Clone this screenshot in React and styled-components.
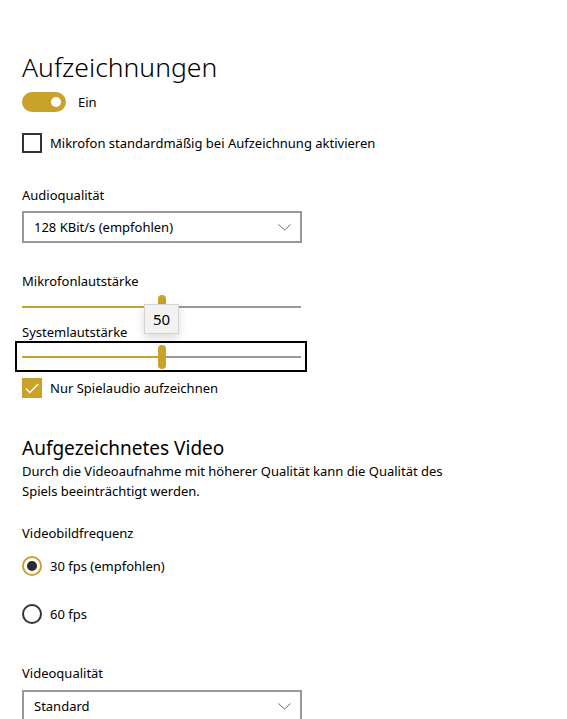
import React from 'react';
import styled, { createGlobalStyle } from 'styled-components';

const GOLD = '#c9a22a';

const GlobalStyle = createGlobalStyle`
  body {
    margin: 0;
    background: #ffffff;
    font-family: 'Noto Sans', 'Open Sans', sans-serif;
    color: #000000;
  }
`;

const Page = styled.div`
  padding: 49px 0 0 22px;
  width: 567px;
  height: 719px;
  box-sizing: border-box;
  overflow: hidden;
`;

const Title = styled.h1`
  margin: 0;
  font-size: 26.5px;
  line-height: 36px;
  font-weight: 300;
`;

const SubTitle = styled.h2`
  margin: 37px 0 0;
  font-size: 19px;
  line-height: 26px;
  font-weight: 400;
`;

const Text = styled.p`
  margin: ${(p) => p.$mt || 0}px 0 0;
  font-size: 13px;
  line-height: 20px;
  width: ${(p) => (p.$wide ? '450px' : 'auto')};
`;

const Row = styled.div`
  display: flex;
  align-items: center;
  gap: ${(p) => p.$gap || 8}px;
  margin-top: ${(p) => p.$mt || 0}px;
  font-size: 13px;
  line-height: 20px;
`;

const Toggle = styled.div`
  width: 44px;
  height: 20px;
  border-radius: 10px;
  background: ${GOLD};
  display: flex;
  align-items: center;
  justify-content: flex-end;
  padding-right: 5px;
  box-sizing: border-box;
  &::after {
    content: '';
    width: 10px;
    height: 10px;
    border-radius: 50%;
    background: #ffffff;
  }
`;

const Box = styled.div`
  width: 20px;
  height: 20px;
  box-sizing: border-box;
  border: 2px solid ${(p) => (p.$checked ? GOLD : '#333333')};
  background: ${(p) => (p.$checked ? GOLD : '#ffffff')};
  display: flex;
  align-items: center;
  justify-content: center;
`;

const Radio = styled.div`
  width: 20px;
  height: 20px;
  box-sizing: border-box;
  border-radius: 50%;
  border: 2px solid ${(p) => (p.$checked ? GOLD : '#333333')};
  display: flex;
  align-items: center;
  justify-content: center;
  &::after {
    content: '';
    display: ${(p) => (p.$checked ? 'block' : 'none')};
    width: 10px;
    height: 10px;
    border-radius: 50%;
    background: #2b2b2b;
  }
`;

const Select = styled.div`
  margin-top: ${(p) => p.$mt || 0}px;
  width: 280px;
  height: 32px;
  box-sizing: border-box;
  border: 2px solid #999999;
  display: flex;
  align-items: center;
  justify-content: space-between;
  padding: 0 9px 0 10px;
  font-size: 13px;
`;

const SliderBox = styled.div`
  position: relative;
  margin: ${(p) => p.$mt || 0}px 0 0 -7px;
  width: 292px;
  height: 31px;
  box-sizing: border-box;
  padding: 0 4px 0 5px;
  border: 2px solid ${(p) => (p.$focused ? '#000000' : 'transparent')};
  display: flex;
  align-items: center;
`;

const Track = styled.div`
  position: relative;
  flex: 1;
  height: 2px;
  background: linear-gradient(
    to right,
    ${GOLD} 0 ${(p) => p.$value}%,
    #999999 ${(p) => p.$value}% 100%
  );
`;

const Thumb = styled.div`
  position: absolute;
  top: -11px;
  width: 8px;
  height: 24px;
  border-radius: 4px;
  background: ${GOLD};
  transform: translateX(-50%);
`;

const Tooltip = styled.div`
  position: absolute;
  z-index: 2;
  top: 11px;
  left: 127px;
  width: 35px;
  height: 30px;
  box-sizing: border-box;
  background: #f2f2f2;
  border: 1px solid #d4d4d4;
  box-shadow: 0 4px 10px rgba(0, 0, 0, 0.15);
  display: flex;
  align-items: center;
  justify-content: center;
  font-size: 15px;
`;

const Chevron = () => (
  <svg width="13" height="7" viewBox="0 0 13 7">
    <path d="M0.5 0.5 L6.5 6 L12.5 0.5" fill="none" stroke="#666" strokeWidth="1" />
  </svg>
);

const Check = () => (
  <svg width="14" height="11" viewBox="0 0 14 11">
    <path d="M0.8 5.6 L4.8 9.6 L13.2 1" fill="none" stroke="#fff" strokeWidth="1.4" />
  </svg>
);

const Slider = ({ value, focused, tooltip, mt }) => (
  <SliderBox $focused={focused} $mt={mt}>
    <Track $value={value}>
      <Thumb style={{ left: `${value}%` }} />
    </Track>
    {tooltip && <Tooltip>{value}</Tooltip>}
  </SliderBox>
);

const App = () => (
  <>
    <GlobalStyle />
    <Page>
      <Title>Aufzeichnungen</Title>
      <Row $gap={12} $mt={7}>
        <Toggle />
        Ein
      </Row>
      <Row $mt={21}>
        <Box />
        Mikrofon standardmäßig bei Aufzeichnung aktivieren
      </Row>
      <Text $mt={32}>Audioqualität</Text>
      <Select $mt={6}>
        128 KBit/s (empfohlen)
        <Chevron />
      </Select>
      <Text $mt={28}>Mikrofonlautstärke</Text>
      <Slider value={50} tooltip mt={0} />
      <Text>Systemlautstärke</Text>
      <Slider value={50} focused mt={-1} />
      <Row $mt={6}>
        <Box $checked>
          <Check />
        </Box>
        Nur Spielaudio aufzeichnen
      </Row>
      <SubTitle>Aufgezeichnetes Video</SubTitle>
      <Text $wide>
        Durch die Videoaufnahme mit höherer Qualität kann die Qualität des Spiels beeinträchtigt werden.
      </Text>
      <Text $mt={22}>Videobildfrequenz</Text>
      <Row $mt={13}>
        <Radio $checked />
        30 fps (empfohlen)
      </Row>
      <Row $mt={28}>
        <Radio />
        60 fps
      </Row>
      <Text $mt={39}>Videoqualität</Text>
      <Select $mt={7}>
        Standard
        <Chevron />
      </Select>
    </Page>
  </>
);

export default App;
